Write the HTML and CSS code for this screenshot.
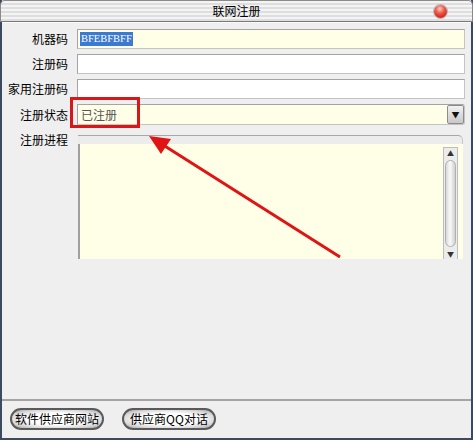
FILE: index.html
```html
<!DOCTYPE html>
<html lang="zh-CN">

<head>
    <meta charset="UTF-8">
    <title>联网注册</title>
    <link rel="stylesheet" href="styles.css">
</head>

<body>
    <div class="window">
        <div class="titlebar">
            <span class="title">联网注册</span>
            <span class="close-btn"></span>
        </div>

        <div class="content">
            <div class="form">
                <label>机器码</label>
                <div class="field yellow"><span class="selected">BFEBFBFF</span></div>

                <label>注册码</label>
                <div class="field"></div>

                <label>家用注册码</label>
                <div class="field"></div>

                <label>注册状态</label>
                <div class="field yellow combo">
                    <span class="value">已注册</span>
                    <span class="drop-btn">&#9660;</span>
                </div>

                <label class="top">注册进程</label>
                <div class="log">
                    <div class="log-head"></div>
                    <div class="log-body">
                        <div class="scrollbar">
                            <span class="arrow">&#9650;</span>
                            <span class="thumb"></span>
                            <span class="arrow">&#9660;</span>
                        </div>
                    </div>
                </div>
            </div>

            <div class="footer">
                <button class="pill-button">软件供应商网站</button>
                <button class="pill-button">供应商QQ对话</button>
            </div>
        </div>

        <!-- red callout pointing at the status field -->
        <div class="mark-box"></div>
        <svg class="mark-arrow" width="473" height="440" viewBox="0 0 473 440">
            <line x1="340" y1="257" x2="160" y2="143" stroke="#e01414" stroke-width="3" />
            <polygon points="149,136 171,139 161,154" fill="#e01414" />
        </svg>
    </div>
</body>

</html>
```

FILE: styles.css
```css
body {
    margin: 0;
    padding: 0;
    font-family: "Noto Sans CJK SC", "Liberation Sans", sans-serif;
    font-size: 12px;
    color: #000;
}

.window {
    position: relative;
    width: 473px;
    height: 440px;
    box-sizing: border-box;
    background-color: #efefef;
    border-left: 2px solid #3c4a60;
    border-right: 2px solid #3c4a60;
    border-bottom: 2px solid #3c4a60;
    display: flex;
    flex-direction: column;
}

.titlebar {
    height: 22px;
    flex: none;
    position: relative;
    display: flex;
    align-items: center;
    justify-content: center;
    margin: 0 -2px;
    border-radius: 5px 5px 0 0;
    border: 1px solid #8a8a8a;
    border-bottom: 1px solid #7a7a7a;
    box-sizing: border-box;
    background: repeating-linear-gradient(to bottom, #f4f4f4 0, #f4f4f4 2px, #dedede 2px, #dedede 4px);
}

.title {
    font-size: 12px;
    line-height: 14px;
}

.close-btn {
    position: absolute;
    right: 25px;
    top: 4px;
    width: 13px;
    height: 13px;
    border-radius: 50%;
    background: radial-gradient(circle at 45% 30%, #ffd0c8 0, #f06050 35%, #c81e12 80%, #9a1008 100%);
    box-shadow: 0 0 0 1px #b8b8b8;
}

.content {
    flex: 1;
    display: flex;
    flex-direction: column;
    border-top: 1px solid #fafafa;
}

.form {
    flex: 1;
    display: grid;
    grid-template-columns: 66px 1fr;
    column-gap: 9px;
    row-gap: 5px;
    align-items: center;
    padding: 6px 6px 0 0;
    align-content: start;
}

.form label {
    text-align: right;
    line-height: 14px;
}

.form label.top {
    align-self: start;
    padding-top: 3px;
}

.field {
    height: 20px;
    box-sizing: border-box;
    background-color: #fff;
    border: 1px solid #a4a4a4;
    border-bottom-color: #c4c4c4;
    border-right-color: #c4c4c4;
    display: flex;
    align-items: center;
    padding-left: 2px;
}

.field.yellow {
    background-color: #fffee6;
}

.selected {
    background-color: #3b7ad0;
    color: #fff;
    font-family: "Liberation Serif", serif;
    font-size: 10.5px;
    line-height: 14px;
    padding: 0 1px;
}

.combo {
    height: 21px;
    padding-left: 3px;
    padding-right: 0;
    justify-content: space-between;
    border-radius: 0 3px 3px 0;
}

.combo .value {
    color: #555;
    font-size: 12px;
}

.drop-btn {
    width: 17px;
    height: 19px;
    box-sizing: border-box;
    border: 1px solid #8c8c8c;
    border-radius: 2px;
    background: linear-gradient(to bottom, #f2f2f2, #c8c8c8);
    font-size: 8px;
    line-height: 17px;
    text-align: center;
    color: #111;
}

.log {
    height: 124px;
    margin: 5px 2px 0 1px;
    display: flex;
    flex-direction: column;
}

.log-head {
    height: 8px;
    border-top: 1px solid #a8a8a8;
    border-right: 1px solid #c8c8c8;
    border-radius: 0 5px 0 0;
    background-color: #ececec;
}

.log-body {
    flex: 1;
    background-color: #fffee6;
    border-left: 2px solid #a0a0a0;
    display: flex;
    justify-content: flex-end;
    padding: 3px 5px 0 0;
}

.scrollbar {
    width: 15px;
    box-sizing: border-box;
    border: 1px solid #bdbdbd;
    border-bottom: none;
    background-color: #ececec;
    display: flex;
    flex-direction: column;
    align-items: center;
}

.scrollbar .arrow {
    font-size: 7px;
    line-height: 10px;
    color: #333;
}

.scrollbar .thumb {
    flex: 1;
    width: 11px;
    margin: 2px 0;
    border: 1px solid #b0b0b0;
    border-radius: 6px;
    box-sizing: border-box;
    background: linear-gradient(to right, #d8d8d8, #fafafa 45%, #d0d0d0);
}

.footer {
    height: 39px;
    flex: none;
    border-top: 2px solid #a4a4a4;
    display: flex;
    align-items: center;
    gap: 18px;
    padding-left: 8px;
    padding-bottom: 2px;
    box-sizing: border-box;
}

.pill-button {
    width: 94px;
    height: 22px;
    padding: 0;
    border: 2px solid #5a5a5a;
    border-radius: 11px;
    background: radial-gradient(ellipse at center, #ffffff 45%, #d8d8d8 75%, #9a9a9a 100%);
    font-family: "Noto Sans CJK SC", "Liberation Sans", sans-serif;
    font-size: 12px;
    line-height: 16px;
    color: #000;
    cursor: pointer;
}

.mark-box {
    position: absolute;
    left: 68px;
    top: 97px;
    width: 64px;
    height: 25px;
    border: 3px solid #d81818;
}

.mark-arrow {
    position: absolute;
    left: -2px;
    top: 0;
    pointer-events: none;
}
```
